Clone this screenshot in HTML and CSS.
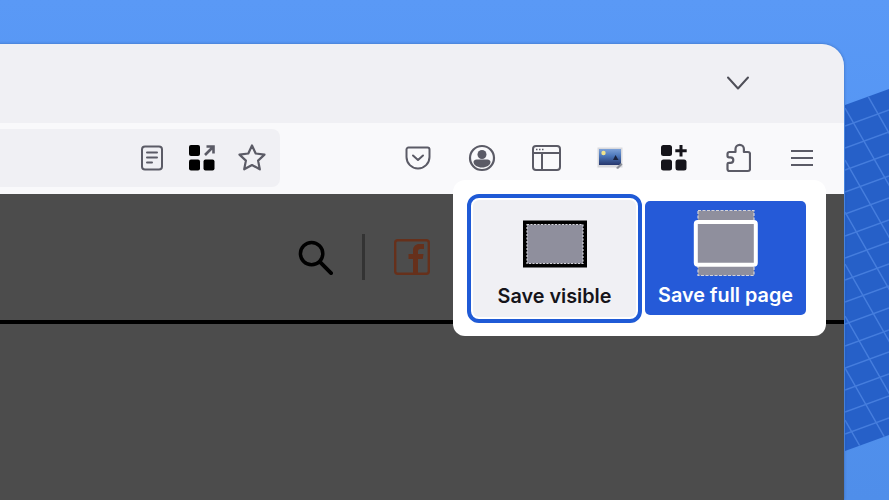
FILE: index.html
```html
<!DOCTYPE html>
<html lang="en">
<head>
<meta charset="utf-8">
<title>Screenshot popup</title>
<link rel="stylesheet" href="styles.css">
</head>
<body>
<svg class="grid-art" viewBox="0 0 60 380" width="60" height="380" aria-hidden="true">
  <defs><clipPath id="gc"><path d="M0 25L44 9V355L0 371Z"/></clipPath></defs>
  <path d="M0 25L44 9V355L0 371Z" fill="#2660c8"/>
  <g clip-path="url(#gc)" stroke="#457ddd" stroke-width="1.500" fill="none">
    <path d="M0 46l44-16M0 68l44-16M0 90l44-16M0 112l44-16M0 134l44-16M0 156l44-16M0 178l44-16M0 200l44-16M0 222l44-16M0 244l44-16M0 266l44-16M0 288l44-16M0 310l44-16M0 332l44-16M0 354l44-16"/>
    <path d="M0 -24l60 105M0 28l60 105M0 80l60 105M0 132l60 105M0 184l60 105M0 236l60 105M0 288l60 105M0 340l60 105"/>
  </g>
</svg>
<main class="window">
  <div class="tabbar">
    <svg class="chevron" width="24" height="16" viewBox="0 0 24 16"><path d="M2 2.500l10 11 10-11" fill="none" stroke="#4f4f58" stroke-width="2" stroke-linecap="round" stroke-linejoin="round"/></svg>
  </div>
  <div class="toolbar">
    <div class="urlbar">
      <span class="slot-url"><svg width="22" height="26" viewBox="0 0 22 26" fill="none" stroke="#5b5b66" stroke-width="2" stroke-linecap="round"><rect x="1" y="1.500" width="20" height="23" rx="3"/><path d="M6 7.500h10M6 12.500h10M6 17.500h5"/></svg></span>
      <span class="slot-url"><svg width="26" height="26" viewBox="0 0 26 26"><rect x="0" y="0" width="11" height="11" rx="2" fill="#000"/><rect x="0" y="14.500" width="11" height="11" rx="2" fill="#000"/><rect x="14.500" y="14.500" width="11" height="11" rx="2" fill="#000"/><path d="M16 10L24 2M17.500 1.500h7v7" fill="none" stroke="#5b5b66" stroke-width="2.600"/></svg></span>
      <span class="slot-url"><svg width="28" height="28" viewBox="0 0 28 28"><path d="M14 1.500l3.700 8 8.800 1.100-6.400 6 1.700 8.700L14 21l-7.800 4.300 1.700-8.700-6.400-6 8.800-1.100z" fill="none" stroke="#5b5b66" stroke-width="2.200" stroke-linejoin="round"/></svg></span>
    </div>
    <div class="actions">
      <span class="slot"><svg width="26" height="24" viewBox="0 0 26 24" fill="none" stroke="#5b5b66" stroke-width="2" stroke-linecap="round" stroke-linejoin="round"><path d="M3.500 1.500h19a2 2 0 0 1 2 2V11a11.500 11.500 0 0 1-23 0V3.500a2 2 0 0 1 2-2z"/><path d="M8 9.500l5 4.500 5-4.500"/></svg></span>
      <span class="slot"><svg width="28" height="28" viewBox="0 0 28 28"><circle cx="14" cy="14" r="12" fill="none" stroke="#5b5b66" stroke-width="2.200"/><circle cx="14" cy="10.500" r="4.500" fill="#5b5b66"/><path d="M5.500 18c0-1.500 1.500-2.500 3-2.500h11c1.500 0 3 1 3 2.500 0 3-4 5.500-8.500 5.500S5.500 21 5.500 18z" fill="#5b5b66"/></svg></span>
      <span class="slot"><svg width="29" height="26" viewBox="0 0 29 26" fill="none" stroke="#5b5b66" stroke-width="2"><rect x="1" y="1" width="27" height="24" rx="3"/><path d="M1 8h27M10 8v17"/><path d="M4 4.500h1.500M7 4.500h1.500M10 4.500h1.500" stroke-width="1.500"/></svg></span>
      <span class="slot"><svg width="26" height="22" viewBox="0 0 26 22"><defs><linearGradient id="ph" x1="0" y1="0" x2="0" y2="1"><stop offset="0" stop-color="#7ea2d8"/><stop offset=".45" stop-color="#4a75b8"/><stop offset="1" stop-color="#27376c"/></linearGradient></defs><rect x=".5" y=".5" width="25" height="20" fill="#d9dade"/><rect x="2" y="2" width="22" height="16" fill="url(#ph)"/><circle cx="6.500" cy="6" r="2.200" fill="#f1e48d"/><path d="M16 13l2.500-5 3 5z" fill="#1b2440"/><path d="M19 21l5-5 1.500 1.500-4.500 4.500z" fill="#8a8d96"/></svg></span>
      <span class="slot"><svg width="26" height="26" viewBox="0 0 26 26" fill="#15141a"><rect x="0" y="0" width="11" height="11" rx="2.500"/><rect x="0" y="14.500" width="11" height="11" rx="2.500"/><rect x="14.500" y="14.500" width="11" height="11" rx="2.500"/><path d="M18.500 0h3v4.200h4.200v3h-4.200v4.200h-3V7.200h-4.200v-3h4.200z"/></svg></span>
      <span class="slot"><svg width="26" height="30" viewBox="-1 0 26 30"><path d="M3.500 28a2 2 0 0 1-2-2v-5c0-.8.700-1.100 1.500-1.100h1.500a2.800 2.800 0 0 0 0-5.600H3a1.500 1.500 0 0 1-1.500-1.500V11a2 2 0 0 1 2-2h6V6a4.200 4.200 0 0 1 8.400 0v3h4.100a2 2 0 0 1 2 2v15a2 2 0 0 1-2 2z" fill="none" stroke="#5b5b66" stroke-width="2.200" stroke-linejoin="round"/></svg></span>
      <span class="slot"><svg width="22" height="18" viewBox="0 0 22 18" stroke="#5b5b66" stroke-width="2"><path d="M0 2h22M0 9h22M0 16h22"/></svg></span>
    </div>
  </div>
  <div class="page">
    <header class="site-head">
      <svg width="35" height="35" viewBox="0 0 36 36" fill="none" stroke="#000" stroke-width="3.600"><circle cx="14" cy="14" r="11.500"/><path d="M22.500 22.500L34 34" stroke-width="4" stroke-linecap="round"/></svg>
      <span class="divider"></span>
      <svg width="36" height="36" viewBox="0 0 36 36"><rect x="1.200" y="1.200" width="33.600" height="33.600" rx="2.500" fill="none" stroke="#66301b" stroke-width="2.400"/><path d="M19 35V20h-4.500v-5H19v-3.500C19 7.500 21.500 5 25.500 5H30v5h-3.500c-1.700 0-2.500.800-2.500 2.500V15h5.500l-.8 5H24v15z" fill="#66301b"/></svg>
    </header>
  </div>
  <div class="popup">
    <button class="shot shot-visible" type="button">
      <svg width="72" height="66" viewBox="0 0 72 66"><rect x="4" y="9.500" width="64" height="47" fill="#000"/><rect x="8" y="13.500" width="56" height="39" fill="#8f8f9d" stroke="#d4d4da" stroke-width="1.200" stroke-dasharray="2 1.500"/></svg>
      <span>Save visible</span>
    </button>
    <button class="shot shot-full" type="button">
      <svg width="72" height="66" viewBox="0 0 72 66"><rect x="8" y=".5" width="56" height="65" fill="#8f8f9d" stroke="#d4d4da" stroke-width="1.200" stroke-dasharray="3 1.500"/><rect x="5.800" y="12" width="60" height="42.700" rx="2" fill="#8f8f9d" stroke="#fff" stroke-width="4"/></svg>
      <span>Save full page</span>
    </button>
  </div>
</main>
</body>
</html>
```
FILE: styles.css
```css
html, body {
  margin: 0;
  height: 100%;
}

body {
  position: relative;
  width: 889px;
  height: 500px;
  overflow: hidden;
  padding-top: 44px;
  box-sizing: border-box;
  background: linear-gradient(180deg, #5a99f6 0%, #5294f2 45%, #4f8eea 100%);
  font-family: Inter, "Liberation Sans", sans-serif;
}

.grid-art {
  position: absolute;
  left: 845px;
  top: 80px;
}

.window {
  position: relative;
  width: 864px;
  height: 456px;
  margin-left: -20px;
  border-top-right-radius: 22px;
  overflow: hidden;
  display: flex;
  flex-direction: column;
  box-shadow: 0 0 3px rgba(20, 50, 110, .45);
}

.tabbar {
  height: 79px;
  flex: none;
  background: #f0f0f4;
  display: flex;
  justify-content: flex-end;
  align-items: flex-start;
  padding: 31px 94px 0 0;
  box-sizing: border-box;
}

.toolbar {
  height: 71px;
  flex: none;
  background: #f9f9fb;
  display: flex;
  align-items: center;
  justify-content: space-between;
  padding-right: 10px;
  box-sizing: border-box;
}

.urlbar {
  width: 300px;
  height: 58px;
  margin-top: -1px;
  background: #f0f0f4;
  border-radius: 0 8px 8px 0;
  display: flex;
  justify-content: flex-end;
  align-items: center;
  padding-right: 3px;
  box-sizing: border-box;
}

.slot-url {
  width: 50px;
  display: flex;
  justify-content: center;
}

.actions {
  display: flex;
  margin-top: -1px;
}

.slot {
  width: 64px;
  display: flex;
  justify-content: center;
  align-items: center;
  height: 30px;
}

.page {
  flex: 1;
  background: #4c4c4c;
}

.site-head {
  height: 126px;
  border-bottom: 4px solid #000;
  display: flex;
  align-items: center;
  gap: 29px;
  padding-left: 318px;
}

.divider {
  width: 3px;
  height: 46px;
  background: #333;
}

.popup {
  position: absolute;
  left: 473px;
  top: 136px;
  width: 373px;
  height: 156px;
  box-sizing: border-box;
  background: #fff;
  border-radius: 12px;
  display: flex;
  align-items: center;
  gap: 9px;
  padding-left: 20px;
}

.shot {
  border: 0;
  margin: 0;
  padding: 0;
  font: 600 19.800px/22px Inter, "Liberation Sans", sans-serif;
  border-radius: 5px;
  display: flex;
  flex-direction: column;
  align-items: center;
  gap: 8px;
  box-sizing: border-box;
}

.shot svg {
  display: block;
}

.shot-visible {
  width: 163px;
  height: 117px;
  padding-top: 11px;
  background: #f0f0f4;
  color: #15141a;
  outline: 4px solid #1f5ad6;
  outline-offset: 2px;
  border-radius: 6px;
}

.shot-full {
  width: 161px;
  height: 114px;
  padding-top: 9px;
  background: #255ad8;
  color: #fff;
}
```
